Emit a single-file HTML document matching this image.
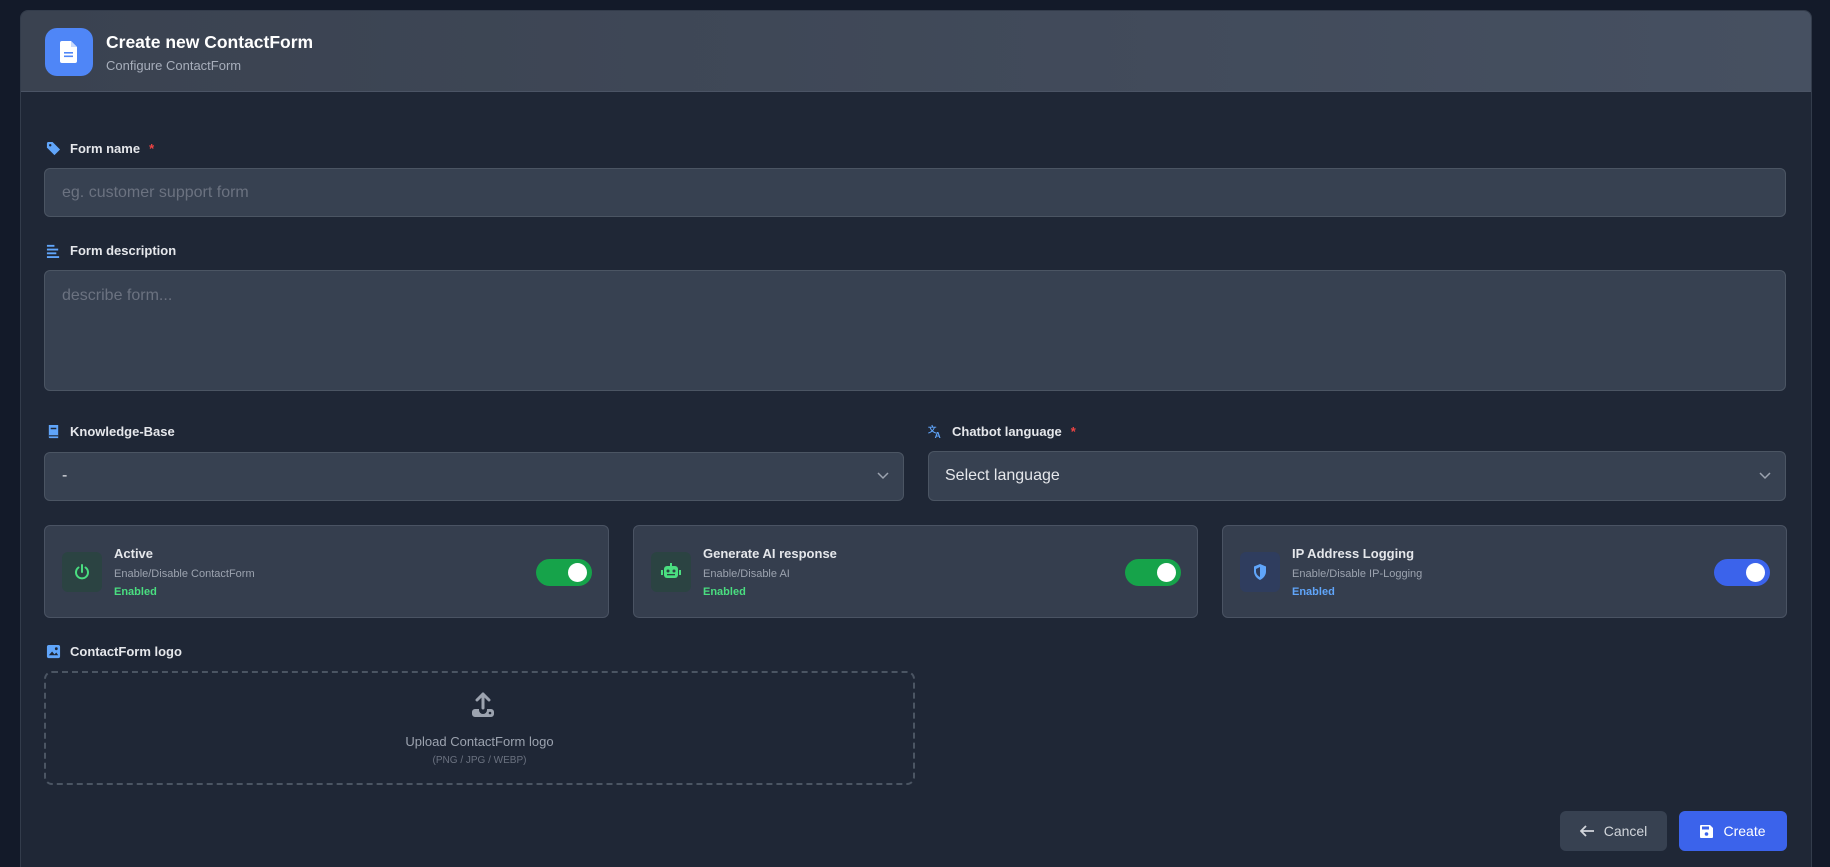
<!DOCTYPE html>
<html style="height:867px;overflow:hidden"><head><meta charset="utf-8"><style>
*{box-sizing:border-box;margin:0;padding:0}
body{width:1830px;height:867px;overflow:hidden;background:#131a29;font-family:"Liberation Sans",sans-serif;position:relative}
.a{position:absolute}
.card{left:20px;top:10px;width:1792px;height:870px;background:#1f2736;border:1px solid #333c4b;border-bottom:none;border-radius:8px 8px 0 0;overflow:hidden}
.hdr{left:0;top:0;width:100%;height:81px;background:linear-gradient(90deg,#3a4250,#465061);border-bottom:1px solid #4b5465}
.lbl{font-size:13px;font-weight:bold;color:#e5e7eb;display:flex;align-items:center;gap:9px}
.lbl svg{width:15px;height:15px}
.req{color:#ef4444}
.inp{background:#374151;border:1px solid #4b5563;border-radius:6px}
.ph{color:#6b7280;font-size:16px}
.tg{background:#353e4e;border:1px solid #4a5363;border-radius:6px;height:93px;width:565px;top:525px}
.ib{position:absolute;left:17px;top:26px;width:40px;height:40px;border-radius:6px;display:flex;align-items:center;justify-content:center}
.tt{position:absolute;left:69px;top:20px;font-size:13px;font-weight:bold;color:#e5e7eb}
.ts{position:absolute;left:69px;top:42px;font-size:11px;color:#9ca3af}
.te{position:absolute;left:69px;top:60px;font-size:11px;font-weight:bold}
.sw{position:absolute;right:16px;top:33px;width:56px;height:27px;border-radius:14px}
.sw i{position:absolute;right:5px;top:4px;width:19px;height:19px;border-radius:50%;background:#fff}
</style></head><body>
<div class="a card">
 <div class="a hdr">
  <div class="a" style="left:24px;top:17px;width:48px;height:48px;border-radius:12px;background:#4f86f7;display:flex;align-items:center;justify-content:center">
   <svg width="18" height="22" viewBox="0 0 18 22"><path d="M2 0h9l6 6v14a2 2 0 0 1-2 2H2a2 2 0 0 1-2-2V2a2 2 0 0 1 2-2z" fill="#fff"/><path d="M11 0v6h6" fill="#c9dafc"/><rect x="4" y="11" width="9" height="1.6" fill="#4f86f7"/><rect x="4" y="14.5" width="9" height="1.6" fill="#4f86f7"/></svg>
  </div>
  <div class="a" style="left:85px;top:21px;font-size:17.5px;font-weight:bold;color:#fff">Create new ContactForm</div>
  <div class="a" style="left:85px;top:47px;font-size:13px;color:#a7aebb">Configure ContactForm</div>
 </div>
</div>

<div class="a lbl" style="left:46px;top:141px"><svg viewBox="0 0 16 16"><path d="M1 2v5l8 8 6-6-8-8H2z" fill="#60a5fa"/><circle cx="4.5" cy="4.5" r="1.3" fill="#1f2736"/></svg>Form name <span class="req">*</span></div>
<div class="a inp" style="left:44px;top:168px;width:1742px;height:49px"><span class="a ph" style="left:17px;top:15px">eg. customer support form</span></div>

<div class="a lbl" style="left:46px;top:243px"><svg viewBox="0 0 16 16"><g fill="#60a5fa"><rect x="1" y="2" width="8" height="2"/><rect x="1" y="6" width="12" height="2"/><rect x="1" y="10" width="10" height="2"/><rect x="1" y="14" width="13" height="2"/></g></svg>Form description</div>
<div class="a inp" style="left:44px;top:270px;width:1742px;height:121px"><span class="a ph" style="left:17px;top:16px">describe form...</span></div>

<div class="a lbl" style="left:46px;top:424px"><svg viewBox="0 0 16 16"><path d="M3 1h10v14H4a1 1 0 0 1-1-1z" fill="#60a5fa"/><rect x="5" y="4" width="6" height="1.6" fill="#1f2736"/><rect x="3" y="12" width="10" height="1.2" fill="#1f2736"/></svg>Knowledge-Base</div>
<div class="a inp" style="left:44px;top:452px;width:860px;height:49px"><span class="a" style="left:17px;top:14px;font-size:16px;color:#e5e7eb">-</span><svg class="a" style="right:14px;top:19px" width="12" height="8" viewBox="0 0 12 8"><path d="M1 1l5 5 5-5" stroke="#9ca3af" stroke-width="1.5" fill="none"/></svg></div>

<div class="a lbl" style="left:928px;top:424px"><svg viewBox="0 0 16 16"><text x="0" y="9" font-size="9" font-weight="bold" fill="#60a5fa">文</text><text x="7" y="15" font-size="9" font-weight="bold" fill="#60a5fa">A</text></svg>Chatbot language <span class="req">*</span></div>
<div class="a inp" style="left:928px;top:451px;width:858px;height:50px"><span class="a" style="left:16px;top:15px;font-size:16px;color:#e5e7eb">Select language</span><svg class="a" style="right:14px;top:20px" width="12" height="8" viewBox="0 0 12 8"><path d="M1 1l5 5 5-5" stroke="#9ca3af" stroke-width="1.5" fill="none"/></svg></div>

<div class="a tg" style="left:44px"><div class="ib" style="background:#2b4342"><svg width="18" height="18" viewBox="0 0 18 18"><path d="M5.5 4.5a6 6 0 1 0 7 0" stroke="#4ade80" stroke-width="2" fill="none" stroke-linecap="round"/><path d="M9 2v7" stroke="#4ade80" stroke-width="2" stroke-linecap="round"/></svg></div><div class="tt">Active</div><div class="ts">Enable/Disable ContactForm</div><div class="te" style="color:#4ade80">Enabled</div><div class="sw" style="background:#16a34a"><i></i></div></div>
<div class="a tg" style="left:633px"><div class="ib" style="background:#2b4342"><svg width="20" height="18" viewBox="0 0 20 18"><rect x="9" y="0" width="2" height="3" fill="#4ade80"/><rect x="3" y="3" width="14" height="12" rx="3" fill="#4ade80"/><rect x="0" y="7" width="2" height="5" fill="#4ade80"/><rect x="18" y="7" width="2" height="5" fill="#4ade80"/><circle cx="7" cy="8" r="1.5" fill="#2b4342"/><circle cx="13" cy="8" r="1.5" fill="#2b4342"/><rect x="6" y="11" width="8" height="1.3" fill="#2b4342"/></svg></div><div class="tt">Generate AI response</div><div class="ts">Enable/Disable AI</div><div class="te" style="color:#4ade80">Enabled</div><div class="sw" style="background:#16a34a"><i></i></div></div>
<div class="a tg" style="left:1222px"><div class="ib" style="background:#2f3d5e"><svg width="16" height="18" viewBox="0 0 16 18"><path d="M8 1l6 2.5v5c0 4-3 7-6 8.5-3-1.5-6-4.5-6-8.5v-5z" fill="#60a5fa"/><path d="M8 4v10c-2-1-4-3-4-5.5V6z" fill="#2f3d5e"/></svg></div><div class="tt">IP Address Logging</div><div class="ts">Enable/Disable IP-Logging</div><div class="te" style="color:#60a5fa">Enabled</div><div class="sw" style="background:#3b63eb"><i></i></div></div>

<div class="a lbl" style="left:46px;top:644px"><svg viewBox="0 0 16 16"><rect x="1" y="1" width="14" height="14" rx="2" fill="#60a5fa"/><path d="M3 12l3.5-4 2.5 3 2-2 2 3z" fill="#1f2736"/><circle cx="11" cy="5" r="1.5" fill="#1f2736"/></svg>ContactForm logo</div>
<div class="a" style="left:44px;top:671px;width:871px;height:114px;border:2px dashed #4b5563;border-radius:8px">
 <svg class="a" style="left:424px;top:19px" width="26" height="28" viewBox="0 0 26 28"><path d="M13 2v14M7 8l6-6 6 6" stroke="#9ca3af" stroke-width="3" fill="none" stroke-linecap="round" stroke-linejoin="round"/><path d="M2 20a3 3 0 0 1 3-3h4v1a4 4 0 0 0 8 0v-1h4a3 3 0 0 1 3 3v2a3 3 0 0 1-3 3H5a3 3 0 0 1-3-3z" fill="#9ca3af"/><circle cx="20" cy="21" r="1.3" fill="#1f2736"/></svg>
 <div class="a" style="left:0;width:100%;top:61px;text-align:center;font-size:13px;color:#9ca3af">Upload ContactForm logo</div>
 <div class="a" style="left:0;width:100%;top:82px;text-align:center;font-size:10px;color:#6b7280">(PNG / JPG / WEBP)</div>
</div>

<div class="a" style="left:1560px;top:811px;width:107px;height:40px;border-radius:6px;background:#374151;color:#d1d5db;font-size:14px;display:flex;align-items:center;justify-content:center;gap:9px"><svg width="15" height="12" viewBox="0 0 15 12"><path d="M14 6H2M6 1L1 6l5 5" stroke="#d1d5db" stroke-width="1.8" fill="none"/></svg>Cancel</div>
<div class="a" style="left:1679px;top:811px;width:108px;height:40px;border-radius:6px;background:#3b63eb;color:#fff;font-size:14px;display:flex;align-items:center;justify-content:center;gap:10px"><svg width="13" height="13" viewBox="0 0 13 13"><path d="M0 1a1 1 0 0 1 1-1h9l3 3v9a1 1 0 0 1-1 1H1a1 1 0 0 1-1-1z" fill="#fff"/><rect x="2" y="1.5" width="7" height="3" fill="#3b63eb"/><circle cx="6.5" cy="9" r="1.8" fill="#3b63eb"/></svg>Create</div>
</body></html>
